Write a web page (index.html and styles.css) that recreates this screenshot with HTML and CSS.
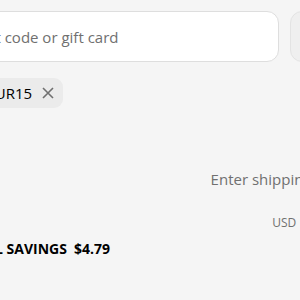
FILE: index.html
```html
<!DOCTYPE html>
<html lang="en">
<head>
<meta charset="utf-8">
<title>Order summary</title>
<link rel="stylesheet" href="styles.css">
</head>
<body>
<div class="summary">
  <div class="discount-row">
    <div class="field"><span class="placeholder">Discount code or gift card</span></div>
    <button class="apply">Apply</button>
  </div>
  <div class="chips">
    <span class="chip">
      <svg class="tag" viewBox="0 0 16 16" width="14" height="14"><path d="M2 2h5.5l6.5 6.5-5.5 5.5L2 7.5z" fill="none" stroke="#707070" stroke-width="1.4" stroke-linejoin="round"/><circle cx="5" cy="5" r="1" fill="#707070"/></svg>
      <span class="chip-text">FAVOUR15</span>
      <svg class="close" viewBox="0 0 12 12" width="12" height="12"><path d="M1 1l10 10M11 1L1 11" stroke="#707070" stroke-width="1.6" fill="none"/></svg>
    </span>
  </div>
  <div class="line shipping">
    <span class="label">Shipping</span>
    <span class="value muted">Enter shipping address</span>
  </div>
  <div class="line total">
    <span class="label total-label">Total</span>
    <span class="value"><span class="currency">USD</span><span class="amount">$27.16</span></span>
  </div>
  <div class="savings">
    <svg class="tag" viewBox="0 0 16 16" width="16" height="16"><path d="M2 2h5.5l6.5 6.5-5.5 5.5L2 7.5z" fill="none" stroke="#000" stroke-width="1.5" stroke-linejoin="round"/><circle cx="5" cy="5" r="1" fill="#000"/></svg>
    <span class="savings-label">TOTAL SAVINGS</span>
    <span class="savings-amount">$4.79</span>
  </div>
</div>
</body>
</html>
```
FILE: styles.css
```css
html, body {
  margin: 0;
  padding: 0;
  overflow: hidden;
  background: #f5f5f5;
}
body {
  font-family: "Open Sans", "Noto Sans", sans-serif;
  color: #000;
  width: 300px;
  height: 300px;
}
.summary {
  width: 446px;
  margin-left: -75px;
  padding-top: 11px;
}
.discount-row {
  display: flex;
  gap: 11px;
}
.field {
  width: 354px;
  flex: none;
  height: 51px;
  box-sizing: border-box;
  background: #fff;
  border: 1px solid #dedede;
  border-radius: 12px;
  display: flex;
  align-items: center;
  padding-left: 13px;
}
.placeholder {
  font-size: 15px;
  color: #707070;
}
.apply {
  flex: 1;
  height: 51px;
  border: 1px solid #e3e3e3;
  background: #efefef;
  border-radius: 12px;
  font-family: inherit;
  font-size: 15px;
  color: #8a8a8a;
}
.chips {
  margin-top: 16px;
  display: flex;
}
.chip {
  display: inline-flex;
  align-items: center;
  gap: 8px;
  height: 30px;
  padding: 0 9px 0 10px;
  background: #ebebeb;
  border-radius: 9px;
  font-size: 15px;
  color: #000;
}
.chip .close {
  margin-left: 2px;
}
.line {
  display: flex;
  justify-content: space-between;
  align-items: baseline;
}
.shipping {
  margin-top: 61px;
}
.label {
  font-size: 15px;
}
.muted {
  font-size: 15px;
  color: #707070;
}
.total {
  margin-top: 18px;
}
.currency {
  font-size: 12px;
  color: #707070;
  margin-right: 15px;
}
.amount {
  font-size: 19px;
  font-weight: 700;
}
.savings {
  display: flex;
  align-items: center;
  gap: 8px;
  margin-top: 6px;
  padding-left: 9px;
  font-size: 14px;
  font-weight: 700;
}
.savings-amount {
  margin-left: -1px;
}
```
